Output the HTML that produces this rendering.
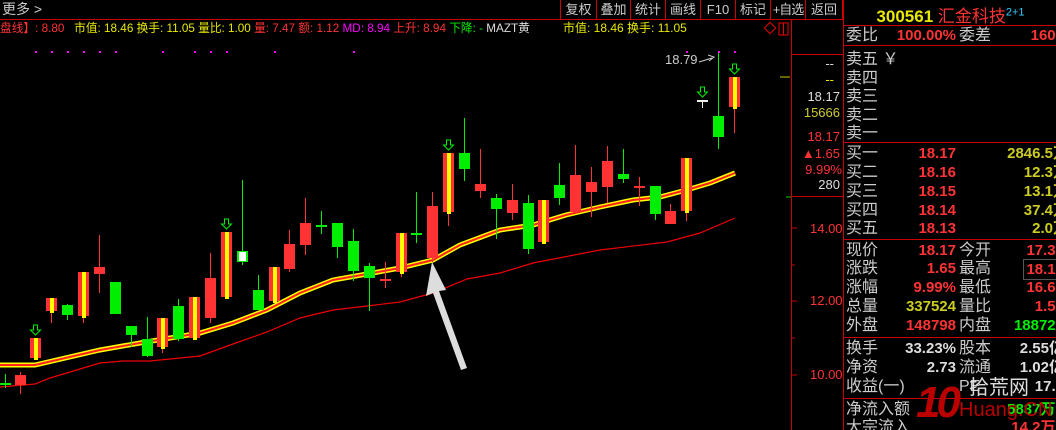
<!DOCTYPE html>
<html><head><meta charset="utf-8"><style>
*{margin:0;padding:0;box-sizing:border-box}
body{width:1056px;height:430px;background:#000;overflow:hidden;position:relative;font-family:"Liberation Sans","Noto Sans CJK SC",sans-serif;}
.a{position:absolute;white-space:nowrap}
.btn{position:absolute;top:0;height:19px;border-right:1px solid #c00;color:#ccc;font-size:13px;line-height:19px;text-align:center;overflow:hidden}
.rp{position:absolute;left:843px;top:0;width:213px;height:430px;border-left:1px solid #c00;overflow:hidden}
.row{position:absolute;left:0;width:260px;height:19px;font-size:16px;line-height:19px}
.l{position:absolute;left:2px;color:#ccc}
.l2{position:absolute;left:115px;color:#ccc}
.v{position:absolute;right:148px;font-weight:bold;font-size:15px}
.v2{position:absolute;right:40px;font-weight:bold;font-size:15px}
.hl{position:absolute;left:0;width:213px;height:1px;background:#c00}
.r{color:#ff3333}.y{color:#e8e800}.g{color:#00ee00}.w{color:#ddd}
</style></head><body>
<div class="a" style="left:2px;top:0;color:#ccc;font-size:14px;line-height:19px">更多 &gt;</div>
<div class="a" style="left:0;top:19px;width:843px;height:1px;background:#c00"></div>
<div class="btn" style="left:560px;width:37px;border-left:1px solid #c00">复权</div>
<div class="btn" style="left:597px;width:34px">叠加</div>
<div class="btn" style="left:631px;width:35px">统计</div>
<div class="btn" style="left:666px;width:35px">画线</div>
<div class="btn" style="left:701px;width:35px">F10</div>
<div class="btn" style="left:736px;width:35px">标记</div>
<div class="btn" style="left:771px;width:35px;letter-spacing:-1px">+自选</div>
<div class="btn" style="left:806px;width:37px">返回</div>
<div class="a" style="left:0;top:20px;font-size:12px;line-height:17px;transform:scaleX(0.975);transform-origin:0 0"><span class="r">盘线】: 8.80</span> &nbsp; <span class="y">市值: 18.46 换手: 11.05 量比: 1.00</span> <span class="r">量: 7.47 额: 1.12</span> <span style="color:#f0f">MD: 8.94</span> <span class="r">上升: 8.94</span> <span class="g">下降: -</span> <span class="w">MAZT黄</span></div>
<div class="a y" style="left:563px;top:20px;font-size:12px;line-height:17px">市值: 18.46 换手: 11.05</div>
<div class="a" style="left:792px;top:54px;width:51px;height:1px;background:#c00"></div>
<div class="a" style="left:792px;top:196px;width:51px;height:1px;background:#c00"></div>
<div class="a" style="left:791px;top:20px;width:1px;height:410px;background:#c00"></div>
<div class="a" style="right:222px;top:56px;color:#ddd;font-size:13px">--</div>
<div class="a y" style="right:222px;top:72px;font-size:13px">--</div>
<div class="a w" style="right:216px;top:89px;font-size:13px">18.17</div>
<div class="a" style="right:216px;top:105px;font-size:13px;color:#cccc33">15666</div>
<div class="a r" style="right:216px;top:129px;font-size:13px">18.17</div>
<div class="a r" style="right:216px;top:146px;font-size:13px">▲1.65</div>
<div class="a r" style="right:214px;top:162px;font-size:13px">9.99%</div>
<div class="a w" style="right:216px;top:177px;font-size:13px">280</div>
<div class="a r" style="left:810px;top:221px;font-size:13px">14.00</div>
<div class="a r" style="left:810px;top:293px;font-size:13px">12.00</div>
<div class="a r" style="left:810px;top:367px;font-size:13px">10.00</div>
<div class="a w" style="left:665px;top:52px;font-size:13px;color:#ccc">18.79</div>
<svg class="a" style="left:0;top:0" width="843" height="430" id="ch">
<rect x="766" y="24" width="8" height="8" fill="none" stroke="#e00" transform="rotate(45 770 28)"/>
<rect x="779" y="23" width="9" height="12" fill="none" stroke="#e00"/><line x1="783.5" y1="23" x2="783.5" y2="35" stroke="#e00"/>
<line x1="780" y1="77" x2="790" y2="77" stroke="#cc0"/>
<line x1="786" y1="197" x2="791" y2="197" stroke="#0c0"/>
<g stroke="#c00"><line x1="791" y1="228" x2="797" y2="228"/><line x1="791" y1="265" x2="795" y2="265"/><line x1="791" y1="301" x2="797" y2="301"/><line x1="791" y1="338" x2="795" y2="338"/><line x1="791" y1="375" x2="797" y2="375"/></g>
<polyline fill="none" stroke="#ee0000" stroke-width="1.2" points="0,387 35,384 50,378 100,363 123,361 150,361 200,356 233,344 267,332 300,318 333,310 367,306 400,302 433,293 467,279 500,273 533,263 600,250 667,242 700,233 735,218"/>
<polyline fill="none" stroke="#ffff00" stroke-width="5" points="0,365 35,365 100,350 140,343 200,333 233,323 267,310 300,293 333,280 367,274 400,268 433,260 460,245 500,230 533,225 566,215 600,207 633,200 660,197 690,189 710,183 735,173"/>
<polyline fill="none" stroke="#ff2020" stroke-width="2" points="0,365 35,365 100,350 140,343 200,333 233,323 267,310 300,293 333,280 367,274 400,268 433,260 460,245 500,230 533,225 566,215 600,207 633,200 660,197 690,189 710,183 735,173"/>
<g id="cd"></g>
<polygon points="432,262 446,290 439,291 467,368 461,370 433,293 426,296" fill="#ddd"/>
<path d="M699 62 L712 58 M708 55 L714 57 L709 61" stroke="#ccc" fill="none"/>
</svg>
<div class="rp">
<div class="a" style="left:0;top:2px;width:213px;text-align:center;font-size:17px"><b class="y">300561</b> <span class="r">汇金科技</span><sup style="color:#3cf;font-size:11px">2+1</sup></div>
<div class="hl" style="top:25px"></div>
<div class="row" style="top:26px"><span class="l">委比</span><span class="v r">100.00%</span><span class="l2">委差</span><span class="v2 r">1602</span></div>
<div class="hl" style="top:45px"></div>
<div class="row" style="top:50px"><span class="l">卖五 ￥</span></div>
<div class="row" style="top:69px"><span class="l">卖四</span></div>
<div class="row" style="top:87px"><span class="l">卖三</span></div>
<div class="row" style="top:106px"><span class="l">卖二</span></div>
<div class="row" style="top:124px"><span class="l">卖一</span></div>
<div class="hl" style="top:142px"></div>
<div class="row" style="top:144px"><span class="l">买一</span><span class="v r">18.17</span><span class="v2" style="color:#cccc22;right:36px">2846.5万</span></div>
<div class="row" style="top:163px"><span class="l">买二</span><span class="v r">18.16</span><span class="v2" style="color:#cccc22;right:36px">12.3万</span></div>
<div class="row" style="top:182px"><span class="l">买三</span><span class="v r">18.15</span><span class="v2" style="color:#cccc22;right:36px">13.1万</span></div>
<div class="row" style="top:201px"><span class="l">买四</span><span class="v r">18.14</span><span class="v2" style="color:#cccc22;right:36px">37.4万</span></div>
<div class="row" style="top:219px"><span class="l">买五</span><span class="v r">18.13</span><span class="v2" style="color:#cccc22;right:36px">2.0万</span></div>
<div class="hl" style="top:239px"></div>
<div class="row" style="top:241px"><span class="l">现价</span><span class="v r">18.17</span><span class="l2">今开</span><span class="v2 r">17.30</span></div>
<div class="row" style="top:259px"><span class="l">涨跌</span><span class="v r">1.65</span><span class="l2">最高</span><span class="v2 r" style="border:1px solid #555;padding:0 2px;right:37px">18.17</span></div>
<div class="row" style="top:278px"><span class="l">涨幅</span><span class="v r">9.99%</span><span class="l2">最低</span><span class="v2 r">16.60</span></div>
<div class="row" style="top:297px"><span class="l">总量</span><span class="v" style="color:#cccc22">337524</span><span class="l2">量比</span><span class="v2 r">1.57</span></div>
<div class="row" style="top:316px"><span class="l">外盘</span><span class="v r">148798</span><span class="l2">内盘</span><span class="v2 g">188726</span></div>
<div class="hl" style="top:337px"></div>
<div class="row" style="top:339px"><span class="l">换手</span><span class="v w">33.23%</span><span class="l2">股本</span><span class="v2 w">2.55亿</span></div>
<div class="row" style="top:358px"><span class="l">净资</span><span class="v w">2.73</span><span class="l2">流通</span><span class="v2 w">1.02亿</span></div>
<div class="row" style="top:377px"><span class="l">收益(一)</span><span class="l2">PE</span><span class="v2 w">17.5</span></div>
<div class="hl" style="top:398px"></div>
<div class="row" style="top:400px"><span class="l">净流入额</span><span class="v2 g" style="right:36px">5837万 0</span></div>
<div class="row" style="top:418px"><span class="l">大宗流入</span><span class="v2 r" style="right:36px">14.2万 0</span></div>
<div class="a" style="left:72px;top:382px;font-size:44px;font-weight:bold;color:#b00;letter-spacing:-4px;line-height:42px;font-style:italic">10</div>
<div class="a" style="left:125px;top:377px;font-size:20px;color:#ddd;line-height:22px">拾荒网</div>
<div class="a" style="left:115px;top:399px;font-size:20px;color:#b00;line-height:22px">Huang.CN</div>
</div>
<script>
var C=[[0,'X',383,383,374,388,'g'],[15,'R',375,385,372,394],[30,'Y',338,358,338,358,1],[46,'Y',298,311,298,323],[62,'G',305,315,304,320],[78,'Y',272,316,272,323],[94,'R',267,274,235,293],[110,'G',282,314,282,314],[126,'G',326,335,326,347],[142,'G',339,356,317,357],[157,'Y',318,347,318,353],[173,'G',306,339,299,341],[189,'Y',297,338,297,338],[205,'R',278,318,253,323],[221,'Y',232,297,232,297,1],[237,'W',251,262,180,265],[253,'G',290,310,275,310],[269,'Y',267,301,267,301],[284,'R',244,269,230,272],[300,'R',223,245,198,255],[316,'X',225,227,211,234,'g'],[332,'G',223,247,223,258],[348,'G',241,271,229,281],[364,'G',266,278,263,311],[380,'X',279,282,262,288,'r'],[396,'Y',233,272,233,277],[411,'X',233,234,192,243,'g'],[427,'R',206,258,192,262],[443,'Y',153,212,153,226,1],[459,'G',153,169,118,181],[475,'R',184,191,149,198],[491,'G',198,209,194,239],[507,'R',200,213,184,220],[523,'G',203,249,195,254],[538,'Y',200,242,200,242],[554,'G',185,198,163,205],[570,'R',175,212,145,212],[586,'R',182,192,167,217],[602,'R',161,187,146,203],[618,'G',174,179,149,183],[634,'X',186,186,177,206,'r'],[650,'G',186,214,186,220],[665,'R',211,224,204,224],[681,'Y',158,211,158,221],[697,'X',100,101,100,108,'w',1],[713,'G',116,137,52,149],[729,'Y',77,107,77,133,1]];
var s='',col={R:'#ff3333',G:'#00ee00',Y:'#ff3333',W:'#00ee00'};
C.forEach(function(c){var x=c[0],t=c[1],cx=x+5.5;
 var wc=t=='X'?({g:'#00ee00',r:'#ff3333',w:'#eee'})[c[6]]:col[t];
 s+='<line x1="'+cx+'" y1="'+c[4]+'" x2="'+cx+'" y2="'+c[5]+'" stroke="'+wc+'"/>';
 if(t=='X'){s+='<rect x="'+x+'" y="'+c[2]+'" width="11" height="2" fill="'+wc+'"/>';}
 else{s+='<rect x="'+x+'" y="'+c[2]+'" width="11" height="'+(c[3]-c[2])+'" fill="'+col[t]+'"/>';
  if(t=='Y')s+='<rect x="'+(x+4)+'" y="'+c[2]+'" width="4" height="'+(c[3]-c[2]+2)+'" fill="#ffff00"/>';
  if(t=='W')s+='<rect x="'+(x+2)+'" y="'+(c[2]+1)+'" width="7" height="'+(c[3]-c[2]-2)+'" fill="#fff"/>';}
 var ar=(t=='X')?c[7]:c[6];
 if(ar){var ty=c[2]-13;s+='<path d="M'+(cx-2)+' '+ty+'h4v5h3l-5 5l-5-5h3z" fill="none" stroke="#00ee00"/>';}
});
[35,51,67,83,99,115,162,194,210,226,274,353,686,718,734].forEach(function(x){s+='<rect x="'+x+'" y="51" width="2" height="2" fill="#f0f"/>';});
for(var y=30;y<430;y+=9)s+='<rect x="843" y="'+y+'" width="5" height="1" fill="#999"/>';
document.getElementById('cd').innerHTML=s;
</script>
</body></html>
